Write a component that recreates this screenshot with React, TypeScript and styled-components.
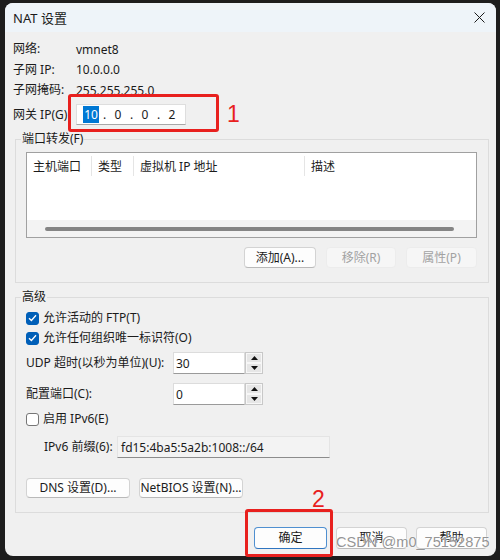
import React from 'react';
import styled, { createGlobalStyle } from 'styled-components';

const GlobalStyle = createGlobalStyle`
  html, body {
    margin: 0;
    padding: 0;
    background: #1d1d1d;
  }
  body {
    width: 500px;
    height: 560px;
    overflow: hidden;
    color: #1b1b1b;
    font-family: "Noto Sans", "Noto Sans CJK SC", sans-serif;
    font-size: 12px;
  }
  * { box-sizing: border-box; }
`;

const Screen = styled.div`
  height: 560px;
  padding: 3px 0 0 5px;
  position: relative;
  width: 500px;
`;

const Window = styled.div`
  background: #f0f0f0;
  border-radius: 8px;
  height: 553px;
  overflow: hidden;
  width: 491px;
`;

const TitleBar = styled.div`
  align-items: center;
  background: #eef4f9;
  display: flex;
  height: 29px;
  justify-content: space-between;
  padding: 0 11px 0 8px;
`;

const Title = styled.span`
  font-size: 13px;
  line-height: 16px;
`;

const Body = styled.div`
  padding: 7px 0 0 8px;
`;

const InfoRow = styled.div<{ $h?: number; $top?: number }>`
  align-items: center;
  display: flex;
  height: ${p => p.$h ?? 20.5}px;
  margin-top: ${p => p.$top ?? 0}px;
`;

const InfoLabel = styled.span`
  flex: 0 0 63px;
  line-height: 16px;
`;

const IpField = styled.div`
  align-items: center;
  background: #fff;
  border: 1px solid #dedede;
  border-bottom-color: #a8a8a8;
  display: flex;
  height: 21px;
  padding-left: 4px;
  width: 110px;
`;

const IpSeg = styled.span`
  text-align: center;
  width: 20px;
`;

const IpDot = styled.span`
  text-align: center;
  width: 7px;
`;

const Selected = styled.span`
  background: #0078d4;
  color: #fff;
  padding: 0 1px;
`;

const Group = styled.fieldset<{ $top: number; $pad: string }>`
  border: 1px solid #dcdcdc;
  margin: ${p => p.$top}px 0 0 2px;
  min-width: 0;
  padding: ${p => p.$pad};
  width: 474px;
`;

const Legend = styled.legend`
  line-height: 16px;
  margin-left: -5px;
  padding: 0 1px;
`;

const ListView = styled.div`
  background: #fff;
  border: 1px solid #a0a0a0;
  display: flex;
  flex-direction: column;
  height: 86px;
  margin-top: 5px;
`;

const ListHeader = styled.div`
  display: flex;
  height: 23px;
`;

const HeaderCell = styled.div<{ $w?: number }>`
  align-items: center;
  border-right: 1px solid #e5e5e5;
  display: flex;
  flex: ${p => (p.$w ? `0 0 ${p.$w}px` : '1')};
  margin: 3px 0 0;
  padding-left: 6px;

  &:last-child { border-right: none; }
`;

const ListBody = styled.div`
  flex: 1;
`;

const HScroll = styled.div`
  align-items: center;
  background: #f3f3f3;
  display: flex;
  height: 17px;
  padding: 0 22px 0 18px;
`;

const Thumb = styled.div`
  background: #858585;
  border-radius: 2px;
  flex: 1;
  height: 4px;
`;

const ButtonRow = styled.div<{ $top: number; $justify?: string; $gap?: number }>`
  display: flex;
  gap: ${p => p.$gap ?? 10}px;
  justify-content: ${p => p.$justify ?? 'flex-end'};
  margin-top: ${p => p.$top}px;
`;

const Button = styled.button<{ $w: number; $h?: number; $primary?: boolean }>`
  background: ${p => (p.disabled ? '#f6f6f6' : '#fdfdfd')};
  border: 1px solid ${p => (p.$primary ? '#4f8fd0' : p.disabled ? '#ececec' : '#d3d3d3')};
  border-bottom-color: ${p => (p.$primary ? '#2f75c0' : p.disabled ? '#ececec' : '#b9b9b9')};
  border-radius: 4px;
  color: ${p => (p.disabled ? '#a2a2a2' : '#1b1b1b')};
  font-family: inherit;
  font-size: 12px;
  height: ${p => p.$h ?? 21}px;
  line-height: 16px;
  padding: 0;
  width: ${p => p.$w}px;
`;

const Row = styled.div<{ $top?: number; $h?: number; $indent?: number }>`
  align-items: center;
  display: flex;
  height: ${p => p.$h ?? 20}px;
  margin-top: ${p => p.$top ?? 0}px;
  padding-left: ${p => p.$indent ?? 0}px;
`;

const CheckBox = styled.span<{ $on?: boolean }>`
  align-items: center;
  background: ${p => (p.$on ? '#005fb8' : '#fff')};
  border: 1px solid ${p => (p.$on ? '#005fb8' : '#767676')};
  border-radius: 3px;
  display: flex;
  flex: 0 0 13px;
  height: 13px;
  justify-content: center;
  margin-right: 4px;
`;

const FieldLabel = styled.span<{ $w: number }>`
  flex: 0 0 ${p => p.$w}px;
  line-height: 16px;
`;

const Text = styled.span`
  line-height: 16px;
`;

const NumberInput = styled.div`
  align-items: center;
  background: #fff;
  border: 1px solid #dcdcdc;
  border-bottom-color: #9a9a9a;
  display: flex;
  height: 22px;
  padding-left: 2px;
  width: 72px;
`;

const Spinner = styled.div`
  border: 1px solid #c8c8c8;
  display: flex;
  flex-direction: column;
  height: 22px;
  width: 18px;
`;

const SpinHalf = styled.div`
  align-items: center;
  background: #e6e6e6;
  border: 1px solid #f7f7f7;
  display: flex;
  flex: 1;
  justify-content: center;
`;

const ReadField = styled.div`
  align-items: center;
  background: #f3f3f3;
  border: 1px solid #e4e4e4;
  border-bottom-color: #8c8c8c;
  display: flex;
  height: 22px;
  padding-left: 3px;
  width: 213px;
`;

const Footer = styled.div`
  display: flex;
  gap: 9px;
  justify-content: flex-end;
  margin-top: 14px;
  padding-right: 9px;
`;

const Mark = styled.div<{ $x: number; $y: number; $w: number; $h: number }>`
  border: 3px solid #e8201e;
  border-radius: 3px;
  height: ${p => p.$h}px;
  left: ${p => p.$x}px;
  position: absolute;
  top: ${p => p.$y}px;
  width: ${p => p.$w}px;
`;

const MarkNum = styled.span<{ $x: number; $y: number }>`
  color: #e8201e;
  font-family: "Liberation Sans", sans-serif;
  font-size: 23px;
  left: ${p => p.$x}px;
  line-height: 24px;
  position: absolute;
  top: ${p => p.$y}px;
`;

const Watermark = styled.span`
  color: rgba(120, 120, 120, 0.8);
  font-family: "Liberation Sans", sans-serif;
  font-size: 14.6px;
  left: 336px;
  line-height: 20px;
  position: absolute;
  text-shadow: 0 0 2px #fff, 0 0 1px #fff;
  top: 532px;
  white-space: nowrap;
`;

const Check = () => (
  <svg width="9" height="8" viewBox="0 0 9 8">
    <path d="M1 4.2 L3.4 6.5 L8 1.3" fill="none" stroke="#fff" strokeWidth="1.3" />
  </svg>
);

const Arrow = ({ down }: { down?: boolean }) => (
  <svg width="7" height="4" viewBox="0 0 7 4">
    <path d={down ? 'M0 0 H7 L3.5 4 Z' : 'M0 4 H7 L3.5 0 Z'} fill="#111" />
  </svg>
);

const Spin = () => (
  <Spinner>
    <SpinHalf><Arrow /></SpinHalf>
    <SpinHalf><Arrow down /></SpinHalf>
  </Spinner>
);

export default function App() {
  return (
    <Screen>
      <GlobalStyle />
      <Window>
        <TitleBar>
          <Title>NAT 设置</Title>
          <svg width="11" height="11" viewBox="0 0 11 11">
            <path d="M0.5 0.5 L10.5 10.5 M10.5 0.5 L0.5 10.5" stroke="#1b1b1b" strokeWidth="1" />
          </svg>
        </TitleBar>
        <Body>
          <InfoRow>
            <InfoLabel>网络:</InfoLabel>
            <span>vmnet8</span>
          </InfoRow>
          <InfoRow>
            <InfoLabel>子网 IP:</InfoLabel>
            <span>10.0.0.0</span>
          </InfoRow>
          <InfoRow>
            <InfoLabel>子网掩码:</InfoLabel>
            <span>255.255.255.0</span>
          </InfoRow>
          <InfoRow $h={21} $top={3.5}>
            <InfoLabel>网关 IP(G):</InfoLabel>
            <IpField>
              <IpSeg><Selected>10</Selected></IpSeg>
              <IpDot>.</IpDot>
              <IpSeg>0</IpSeg>
              <IpDot>.</IpDot>
              <IpSeg>0</IpSeg>
              <IpDot>.</IpDot>
              <IpSeg>2</IpSeg>
            </IpField>
          </InfoRow>

          <Group $top={6} $pad="0 11px 14px 10px">
            <Legend>端口转发(F)</Legend>
            <ListView>
              <ListHeader>
                <HeaderCell $w={65}>主机端口</HeaderCell>
                <HeaderCell $w={42}>类型</HeaderCell>
                <HeaderCell $w={171}>虚拟机 IP 地址</HeaderCell>
                <HeaderCell>描述</HeaderCell>
              </ListHeader>
              <ListBody />
              <HScroll><Thumb /></HScroll>
            </ListView>
            <ButtonRow $top={9}>
              <Button $w={72}>添加(A)...</Button>
              <Button $w={70} disabled>移除(R)</Button>
              <Button $w={71} disabled>属性(P)</Button>
            </ButtonRow>
          </Group>

          <Group $top={6} $pad="3px 11px 14px 10px">
            <Legend>高级</Legend>
            <Row>
              <CheckBox $on><Check /></CheckBox>
              <Text>允许活动的 FTP(T)</Text>
            </Row>
            <Row>
              <CheckBox $on><Check /></CheckBox>
              <Text>允许任何组织唯一标识符(O)</Text>
            </Row>
            <Row $top={4} $h={22}>
              <FieldLabel $w={147}>UDP 超时(以秒为单位)(U):</FieldLabel>
              <NumberInput>30</NumberInput>
              <Spin />
            </Row>
            <Row $top={9} $h={22}>
              <FieldLabel $w={147}>配置端口(C):</FieldLabel>
              <NumberInput>0</NumberInput>
              <Spin />
            </Row>
            <Row $top={4}>
              <CheckBox />
              <Text>启用 IPv6(E)</Text>
            </Row>
            <Row $top={7} $h={22} $indent={18}>
              <FieldLabel $w={73}>IPv6 前缀(6):</FieldLabel>
              <ReadField>fd15:4ba5:5a2b:1008::/64</ReadField>
            </Row>
            <ButtonRow $top={20} $justify="flex-start" $gap={9}>
              <Button $w={104} $h={20}>DNS 设置(D)...</Button>
              <Button $w={104} $h={20}>NetBIOS 设置(N)...</Button>
            </ButtonRow>
          </Group>

          <Footer>
            <Button $w={73} $h={22} $primary>确定</Button>
            <Button $w={71} $h={22}>取消</Button>
            <Button $w={71} $h={22}>帮助</Button>
          </Footer>
        </Body>
      </Window>

      <Mark $x={68} $y={94} $w={151} $h={38} />
      <MarkNum $x={227} $y={102}>1</MarkNum>
      <Mark $x={245} $y={509} $w={88} $h={48} />
      <MarkNum $x={312} $y={487}>2</MarkNum>
      <Watermark>CSDN @m0_75152875</Watermark>
    </Screen>
  );
}
